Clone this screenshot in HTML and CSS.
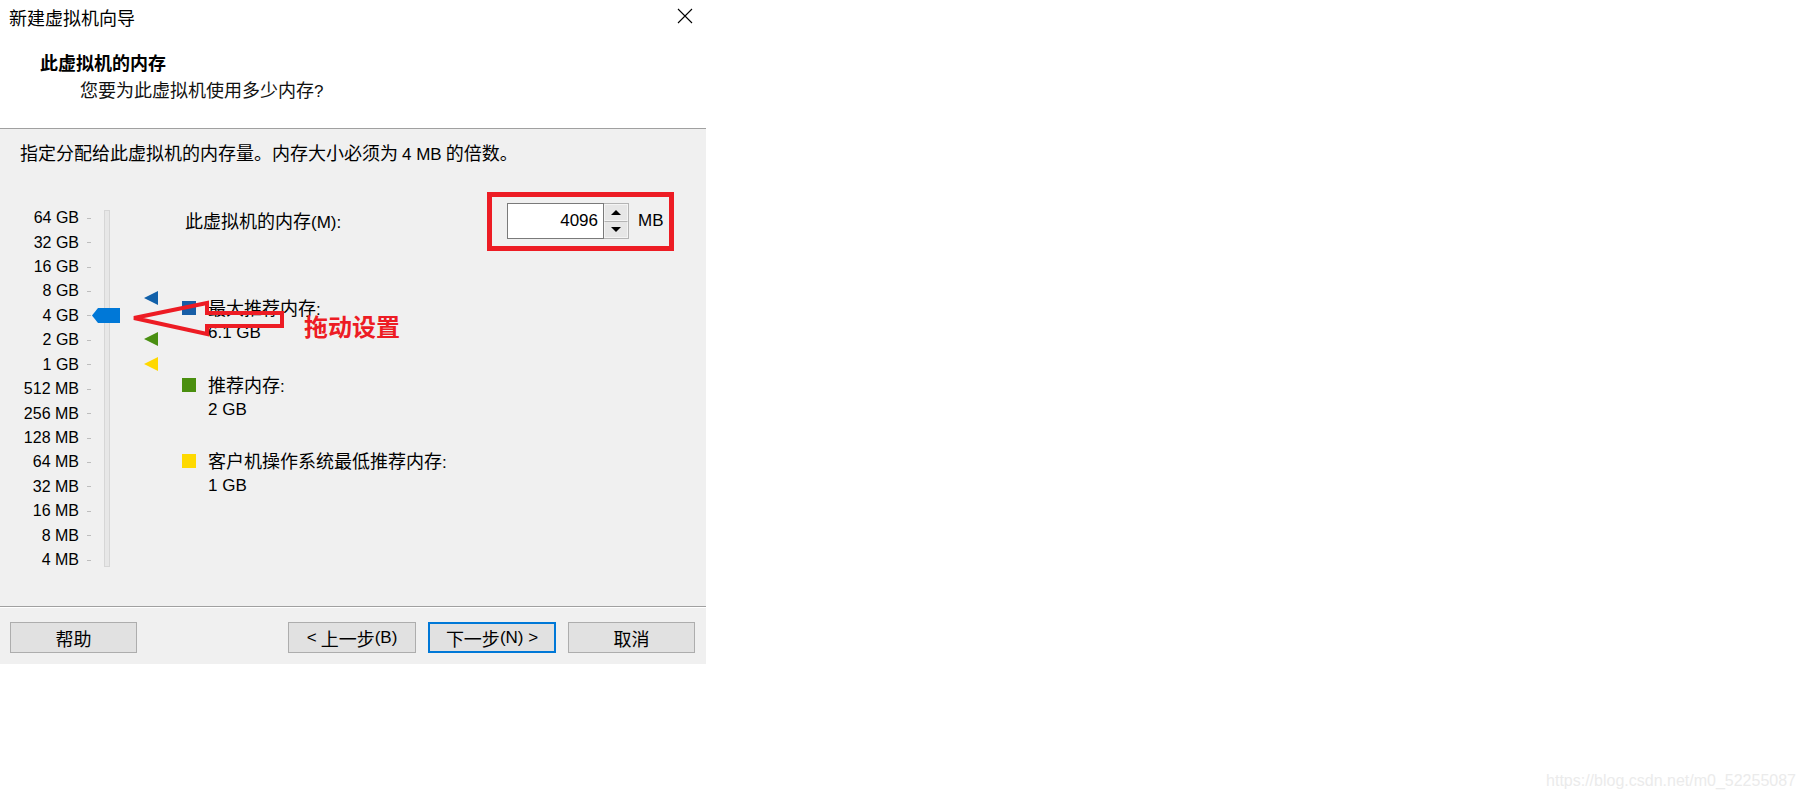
FILE: index.html
```html
<!DOCTYPE html>
<html lang="zh-CN">
<head>
<meta charset="utf-8">
<title>新建虚拟机向导</title>
<link rel="stylesheet" href="styles.css">
</head>
<body>
<div class="dialog">
  <div class="header">
    <div class="titlebar">
      <span class="title">新建虚拟机向导</span>
      <svg class="close" width="16" height="16" viewBox="0 0 16 16"><path d="M1 1 L15 15 M15 1 L1 15" stroke="#000" stroke-width="1.1" fill="none"/></svg>
    </div>
    <div class="heading">此虚拟机的内存</div>
    <div class="sub">您要为此虚拟机使用多少内存<span class="l">?</span></div>
  </div>

  <div class="content">
    <div class="desc">指定分配给此虚拟机的内存量。内存大小必须为 <span class="l">4 MB</span> 的倍数。</div>
    <div class="main">
      <div class="slider">
        <div class="scale">
          <div class="row"><span class="lab">64 GB</span><i class="tick"></i></div>
          <div class="row"><span class="lab">32 GB</span><i class="tick"></i></div>
          <div class="row"><span class="lab">16 GB</span><i class="tick"></i></div>
          <div class="row"><span class="lab">8 GB</span><i class="tick"></i></div>
          <div class="row"><span class="lab">4 GB</span><i class="tick"></i></div>
          <div class="row"><span class="lab">2 GB</span><i class="tick"></i></div>
          <div class="row"><span class="lab">1 GB</span><i class="tick"></i></div>
          <div class="row"><span class="lab">512 MB</span><i class="tick"></i></div>
          <div class="row"><span class="lab">256 MB</span><i class="tick"></i></div>
          <div class="row"><span class="lab">128 MB</span><i class="tick"></i></div>
          <div class="row"><span class="lab">64 MB</span><i class="tick"></i></div>
          <div class="row"><span class="lab">32 MB</span><i class="tick"></i></div>
          <div class="row"><span class="lab">16 MB</span><i class="tick"></i></div>
          <div class="row"><span class="lab">8 MB</span><i class="tick"></i></div>
          <div class="row"><span class="lab">4 MB</span><i class="tick"></i></div>
        </div>
        <div class="track"></div>
        <div class="marks">
          <i class="tri tri-max"></i>
          <i class="tri tri-rec"></i>
          <i class="tri tri-min"></i>
        </div>
        <div class="thumb"></div>
      </div>

      <div class="panel">
        <div class="mem-row">
          <div class="mem-label">此虚拟机的内存<span class="l">(M):</span></div>
          <div class="spin">
            <div class="spin-input">4096</div>
            <div class="spin-btns">
              <div class="sbtn"><i class="up"></i></div>
              <div class="sbtn"><i class="down"></i></div>
            </div>
          </div>
          <div class="unit">MB</div>
        </div>

        <div class="legend">
          <div class="item">
            <i class="sq sq-max"></i>
            <div class="item-label">最大推荐内存<span class="l">:</span></div>
            <div class="item-val">6.1 GB</div>
          </div>
          <div class="item">
            <i class="sq sq-rec"></i>
            <div class="item-label">推荐内存<span class="l">:</span></div>
            <div class="item-val">2 GB</div>
          </div>
          <div class="item">
            <i class="sq sq-min"></i>
            <div class="item-label">客户机操作系统最低推荐内存<span class="l">:</span></div>
            <div class="item-val">1 GB</div>
          </div>
        </div>
      </div>
    </div>
  </div>

  <div class="footer">
    <div class="btn btn-help">帮助</div>
    <div class="btns">
      <div class="btn"><span class="l">&lt;</span>&nbsp;上一步<span class="l">(B)</span></div>
      <div class="btn btn-primary">下一步<span class="l">(N) &gt;</span></div>
      <div class="btn btn-cancel">取消</div>
    </div>
  </div>

  <div class="redbox"></div>
  <svg class="arrow" width="160" height="44" viewBox="0 0 160 44">
    <path d="M6 22 L79 7 L79 17 L154 17 L154 30 L79 30 L79 38 Z" fill="none" stroke="#ed1c24" stroke-width="4" stroke-linejoin="miter"/>
  </svg>
  <div class="drag">拖动设置</div>
</div>
<div class="wm">https://blog.csdn.net/m0_52255087</div>
</body>
</html>
```

FILE: styles.css
```css
* { box-sizing: border-box; }

body {
  margin: 0;
  background: #fff;
  font-family: "Noto Sans CJK SC", sans-serif;
  color: #000;
}

.l {
  font-family: "Liberation Sans", "Noto Sans CJK SC", sans-serif;
  font-size: 17px;
}

.dialog {
  position: relative;
  width: 706px;
}

/* header */
.header {
  height: 129px;
  background: #fff;
  border-bottom: 1px solid #a0a0a0;
}
.titlebar {
  height: 34px;
  display: flex;
  align-items: center;
  justify-content: space-between;
  padding: 0 13px 0 9px;
}
.title { font-size: 18px; line-height: 24px; }
.close { display: block; margin-bottom: 2px; }
.heading {
  margin: 16px 0 0 40px;
  font-size: 18px;
  line-height: 24px;
  font-weight: 700;
}
.sub {
  margin: 3px 0 0 80px;
  font-size: 18px;
  line-height: 24px;
  color: #111;
}

/* content */
.content {
  height: 477px;
  background: #f0f0f0;
  padding-top: 11px;
}
.desc {
  margin-left: 20px;
  font-size: 18px;
  line-height: 24px;
}
.main {
  display: flex;
  margin-top: 33px;
}

/* slider */
.slider {
  position: relative;
  display: flex;
  width: 158px;
  padding-top: 6px;
}
.scale { width: 91px; }
.row {
  height: 24.43px;
  display: flex;
  align-items: center;
}
.lab {
  width: 79px;
  text-align: right;
  font-family: "Liberation Sans", sans-serif;
  font-size: 16px;
  line-height: 18px;
}
.tick {
  width: 4px;
  height: 1px;
  margin-left: 8px;
  background: #bdbdbd;
}
.track {
  margin-left: 13px;
  margin-top: 4px;
  width: 6px;
  height: 357px;
  background: #e7e7e7;
  border: 1px solid #d6d6d6;
}
.marks {
  position: relative;
  flex: 1;
}
.tri {
  position: absolute;
  left: 34px;
  width: 0;
  height: 0;
  border-top: 7px solid transparent;
  border-bottom: 7px solid transparent;
  border-right: 14px solid #000;
}
.tri-max { top: 85px; border-right-color: #1160a9; }
.tri-rec { top: 126px; border-right-color: #4a8f12; }
.tri-min { top: 151px; border-right-color: #ffd800; }
.thumb {
  position: absolute;
  left: 92px;
  top: 108px;
  width: 28px;
  height: 15px;
  background: #0078d7;
  clip-path: polygon(0 50%, 6px 0, 100% 0, 100% 100%, 6px 100%);
}

/* right panel */
.panel { margin-left: 24px; }
.mem-row {
  display: flex;
  align-items: center;
  margin-top: 3px;
  height: 36px;
}
.mem-label {
  width: 325px;
  padding-left: 3px;
  font-size: 18px;
  line-height: 24px;
}
.spin { display: flex; }
.spin-input {
  width: 97px;
  height: 36px;
  background: #fff;
  border: 1px solid #7a7a7a;
  text-align: right;
  padding-right: 5px;
  font-family: "Liberation Sans", sans-serif;
  font-size: 17px;
  line-height: 34px;
}
.spin-btns {
  width: 25px;
  height: 36px;
  display: flex;
  flex-direction: column;
  border: 1px solid #b4b4b4;
  border-left: 0;
}
.sbtn {
  flex: 1;
  display: flex;
  align-items: center;
  justify-content: center;
  background: #e6e6e6;
  border: 1px solid #f4f4f4;
}
.sbtn + .sbtn { border-top: 1px solid #b4b4b4; }
.up, .down {
  width: 0;
  height: 0;
  border-left: 5px solid transparent;
  border-right: 5px solid transparent;
}
.up { border-bottom: 5px solid #000; }
.down { border-top: 5px solid #000; }
.unit {
  margin-left: 9px;
  font-family: "Liberation Sans", sans-serif;
  font-size: 17px;
}

.legend { margin-top: 56px; }
.item {
  display: grid;
  grid-template-columns: 14px auto;
  grid-template-rows: 25px 25px;
  column-gap: 12px;
}
.item + .item { margin-top: 26.5px; }
.sq {
  width: 14px;
  height: 14px;
  margin-top: 6px;
}
.sq-max { background: #175ea6; }
.sq-rec { background: #4a8f0f; }
.sq-min { background: #fed900; }
.item-label {
  font-size: 18px;
  line-height: 25px;
}
.item-val {
  grid-column: 2;
  font-family: "Liberation Sans", sans-serif;
  font-size: 17px;
  line-height: 25px;
}

/* footer */
.footer {
  height: 58px;
  background: #f0f0f0;
  border-top: 1px solid #a0a0a0;
  box-shadow: inset 0 1px 0 #fff;
  padding: 15px 11px 0 10px;
  display: flex;
  justify-content: space-between;
  align-items: flex-start;
}
.btns {
  display: flex;
  gap: 12px;
}
.btn {
  width: 128px;
  height: 31px;
  display: flex;
  align-items: center;
  justify-content: center;
  background: #e1e1e1;
  border: 1px solid #adadad;
  font-size: 18px;
  line-height: 24px;
}
.btn-help, .btn-cancel { width: 127px; }
.btn-primary { border: 2px solid #0078d7; }

/* annotations */
.redbox {
  position: absolute;
  left: 487px;
  top: 192px;
  width: 187px;
  height: 59px;
  border: 5px solid #ed1c24;
}
.arrow {
  position: absolute;
  left: 128px;
  top: 296px;
}
.drag {
  position: absolute;
  left: 304px;
  top: 311px;
  font-size: 24px;
  line-height: 30px;
  font-weight: 700;
  color: #ed1c24;
}

/* watermark */
.wm {
  margin-top: 107px;
  padding-right: 11px;
  text-align: right;
  font-family: "Liberation Sans", sans-serif;
  font-size: 16px;
  line-height: 20px;
  color: #ebebeb;
}
```
